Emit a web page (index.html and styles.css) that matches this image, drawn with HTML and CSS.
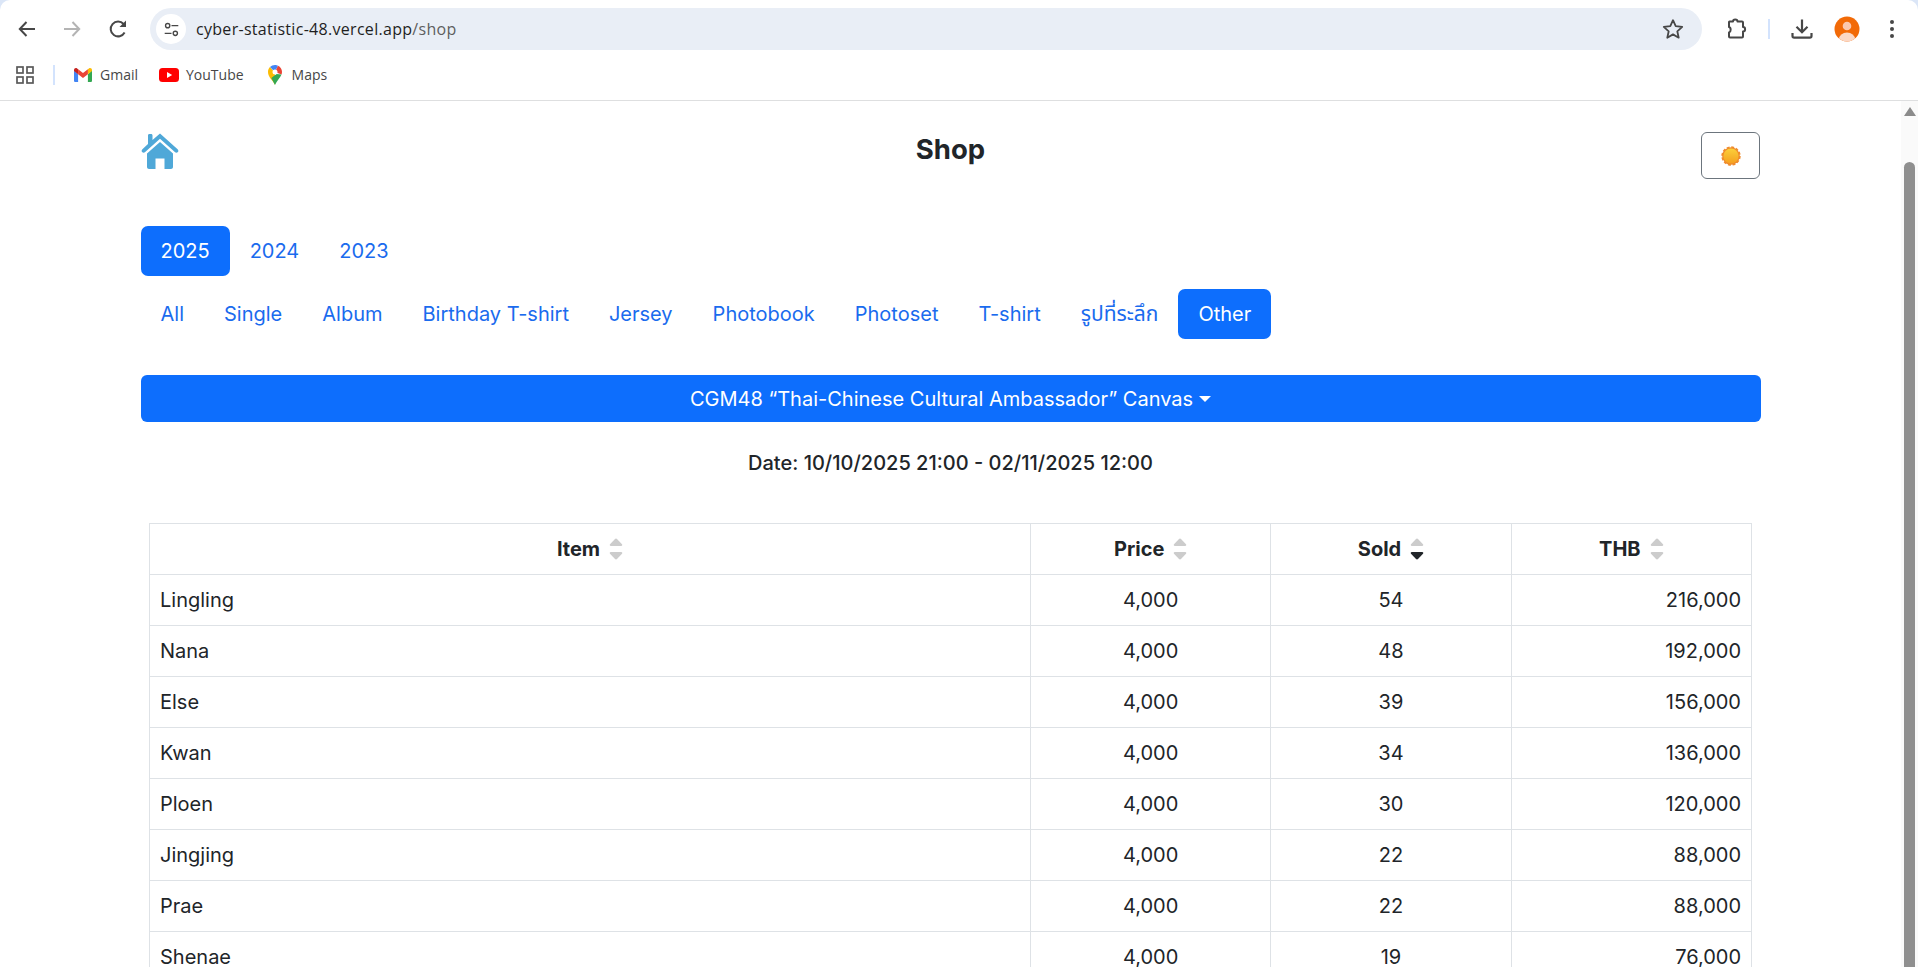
FILE: index.html
```html
<!DOCTYPE html>
<html lang="en">
<head>
<meta charset="utf-8">
<title>Shop</title>
<link rel="stylesheet" href="styles.css">
</head>
<body>
<div class="browser">
  <header class="chrome">
    <div class="toolbar">
      <svg class="tb-icon tb-back" viewBox="0 0 24 24"><path d="M20 12H5M11.5 5L4.8 12l6.7 7" fill="none" stroke="#474747" stroke-width="2"/></svg>
      <svg class="tb-icon tb-forward" viewBox="0 0 24 24"><path d="M4 12h15M12.5 5l6.7 7-6.7 7" fill="none" stroke="#b4b4b4" stroke-width="2"/></svg>
      <svg class="tb-icon tb-reload" viewBox="0 0 24 24"><path d="M18.6 15.5A7.4 7.4 0 1 1 17.6 7L19 8.5" fill="none" stroke="#474747" stroke-width="2"/><path d="M20 3.5V10h-6.5z" fill="#474747"/></svg>
      <div class="omnibox">
        <span class="site-btn">
          <svg viewBox="0 0 20 20" class="site-icon"><circle cx="5.5" cy="5.5" r="2.5" fill="none" stroke="#474747" stroke-width="1.6"/><path d="M10 5.5h8M2 14.5h8" stroke="#474747" stroke-width="1.6"/><circle cx="14.5" cy="14.5" r="2.5" fill="none" stroke="#474747" stroke-width="1.6"/></svg>
        </span>
        <span class="url">cyber-statistic-48.vercel.app<span class="url-path">/shop</span></span>
        <svg class="star" viewBox="0 0 24 24"><path d="M12 3.200l2.700 6 6.500.7-4.900 4.400 1.400 6.400L12 17.400l-5.700 3.300 1.400-6.400-4.900-4.400 6.500-.7z" fill="none" stroke="#474747" stroke-width="1.800" stroke-linejoin="round"/></svg>
      </div>
      <svg class="tb-icon tb-puzzle" viewBox="0 0 24 24"><path d="M5.500 4.500H9c0-2.600 4.500-2.600 4.500 0H18a1 1 0 0 1 1 1V10c2.800 0 2.800 4.500 0 4.500v5a1 1 0 0 1-1 1H6a1 1 0 0 1-1-1v-4c2.200-.6 2.200-5 0-5.500V5a.5.5 0 0 1 .5-.5z" fill="none" stroke="#474747" stroke-width="2" stroke-linejoin="round"/></svg>
      <span class="tb-sep"></span>
      <svg class="tb-icon tb-download" viewBox="0 0 24 24"><path d="M12 2.500v12.500M6.500 9.800L12 15.300l5.500-5.500" fill="none" stroke="#474747" stroke-width="2.200"/><path d="M2.500 16v3c0 1 .6 1.700 1.700 1.700h15.600c1.100 0 1.700-.7 1.700-1.700v-3" fill="none" stroke="#474747" stroke-width="2.200"/></svg>
      <svg class="tb-avatar" viewBox="0 0 26 26"><defs><clipPath id="avatar-clip"><circle cx="13" cy="13" r="12.500"/></clipPath></defs><circle cx="13" cy="13" r="12.500" fill="#f26a07"/><g clip-path="url(#avatar-clip)"><circle cx="13" cy="10" r="4.300" fill="#fbc8ae"/><ellipse cx="13" cy="23" rx="8" ry="6.500" fill="#fbd8c6"/></g></svg>
      <svg class="tb-icon tb-kebab" viewBox="0 0 24 24"><circle cx="12" cy="5" r="2" fill="#474747"/><circle cx="12" cy="12" r="2" fill="#474747"/><circle cx="12" cy="19" r="2" fill="#474747"/></svg>
    </div>
    <nav class="bookmarks">
      <svg class="bm-apps" viewBox="0 0 18 18"><g fill="none" stroke="#5a5a5a" stroke-width="1.700"><rect x="1" y="1" width="6" height="6"/><rect x="11" y="1" width="6" height="6"/><rect x="1" y="11" width="6" height="6"/><rect x="11" y="11" width="6" height="6"/></g></svg>
      <span class="bm-sep"></span>
      <a class="bm bm-gmail">
        <svg class="bm-ic-gmail" viewBox="0 0 18 14"><path d="M0 2.500V12.700C0 13.400.6 14 1.300 14H4.100V6.300z" fill="#4285f4"/><path d="M18 2.500V12.700c0 .7-.6 1.300-1.300 1.300H13.900V6.300z" fill="#34a853"/><path d="M4.100 6.300L0 2.900V2C0 .4 1.800-.5 3.100.5L4.100 1.300z" fill="#c5221f"/><path d="M13.900 6.300L18 2.900V2C18 .4 16.200-.5 14.900.5L13.900 1.300z" fill="#fbbc04"/><path d="M4.100 6.300V1.300L9 5l4.900-3.700v5L9 10z" fill="#ea4335"/></svg>
        <span>Gmail</span>
      </a>
      <a class="bm bm-yt">
        <svg class="bm-ic-yt" viewBox="0 0 20 14"><rect width="20" height="14" rx="3.500" fill="#f00"/><path d="M8 4l5.200 3L8 10z" fill="#fff"/></svg>
        <span>YouTube</span>
      </a>
      <a class="bm bm-maps">
        <svg class="bm-ic-maps" viewBox="0 0 14 20"><path d="M7 20C5.500 16 0 12.300 0 7c0-1.800.7-3.500 2-4.900L7 8z" fill="#fbbc04"/><path d="M2 2.100C3.300.8 5 0 7 0c1 0 2.300.3 3 .7L6.900 7z" fill="#4285f4"/><path d="M10 .7C12.400 1.800 14 4.200 14 7c0 .9-.2 1.800-.5 2.500L7 7z" fill="#ea4335"/><path d="M13.500 9.500C12.300 12.800 8.500 16 7 20L3.300 13 8.500 9z" fill="#34a853"/><circle cx="7" cy="7" r="2.500" fill="#fff"/></svg>
        <span>Maps</span>
      </a>
    </nav>
  </header>

  <div class="viewport">
    <main class="page">
      <div class="container">
        <div class="title-row">
          <svg class="home-icon" viewBox="0 0 38 38"><path d="M19 1.500L36.600 17.200c.9.800 1 2 .3 2.900-.7.800-2 .9-2.800.2L19 6.800 3.900 20.300c-.8.700-2.100.6-2.800-.2-.7-.9-.6-2.100.3-2.900L7 12V3.500c0-.8.600-1.400 1.400-1.400h1.700c.8 0 1.400.6 1.400 1.400V8z" fill="#4fa8d8"/><path d="M19 10L6 21.600V35c0 1.100.9 2 2 2h6.500V26.500h9V37H30c1.100 0 2-.9 2-2V21.600z" fill="#4fa8d8"/></svg>
          <h1 class="title">Shop</h1>
          <button class="theme-btn" type="button">
            <svg class="sun" viewBox="0 0 20 20"><defs><linearGradient id="sun-fill" x1="0.500" y1="0" x2="0.500" y2="1"><stop offset="0%" stop-color="#fbd03a"/><stop offset="100%" stop-color="#f5a01f"/></linearGradient></defs><circle cx="10" cy="10" r="8.800" fill="#ef8b2c" stroke="#ef8b2c" stroke-width="1.800" stroke-dasharray="2.900 1.710"/><circle cx="10" cy="10" r="7.600" fill="url(#sun-fill)"/></svg>
          </button>
        </div>

        <div class="pills year-pills">
          <a class="pill active">2025</a>
          <a class="pill">2024</a>
          <a class="pill">2023</a>
        </div>
        <div class="pills cat-pills">
          <a class="pill">All</a>
          <a class="pill">Single</a>
          <a class="pill">Album</a>
          <a class="pill">Birthday T-shirt</a>
          <a class="pill">Jersey</a>
          <a class="pill">Photobook</a>
          <a class="pill">Photoset</a>
          <a class="pill">T-shirt</a>
          <a class="pill pill-thai">รูปที่ระลึก</a>
          <a class="pill active">Other</a>
        </div>

        <button class="dropdown-btn" type="button">CGM48 “Thai-Chinese Cultural Ambassador” Canvas<span class="caret"></span></button>

        <p class="date">Date: 10/10/2025 21:00 - 02/11/2025 12:00</p>

        <div class="table-wrap">
          <table class="stats">
            <colgroup>
              <col class="col-item"><col class="col-num"><col class="col-num"><col class="col-num">
            </colgroup>
            <thead>
              <tr>
                <th><span class="th-in">Item<svg class="sort" viewBox="0 0 14 22"><path d="M7 0.500c.4 0 .7.200 1 .500l5 5.300c.6.700.2 1.700-.8 1.700H1.800c-1 0-1.400-1-.8-1.700L6 1c.3-.3.600-.5 1-.5z" fill="#ccc"/><path d="M7 21.500c.4 0 .7-.2 1-.5l5-5.300c.6-.7.200-1.700-.8-1.700H1.800c-1 0-1.400 1-.8 1.700l5 5.300c.3.300.6.500 1 .5z" fill="#ccc"/></svg></span></th>
                <th><span class="th-in">Price<svg class="sort" viewBox="0 0 14 22"><path d="M7 0.500c.4 0 .7.200 1 .500l5 5.300c.6.700.2 1.700-.8 1.700H1.800c-1 0-1.400-1-.8-1.700L6 1c.3-.3.600-.5 1-.5z" fill="#ccc"/><path d="M7 21.500c.4 0 .7-.2 1-.5l5-5.300c.6-.7.200-1.700-.8-1.700H1.800c-1 0-1.400 1-.8 1.700l5 5.300c.3.300.6.500 1 .5z" fill="#ccc"/></svg></span></th>
                <th><span class="th-in">Sold<svg class="sort" viewBox="0 0 14 22"><path d="M7 0.500c.4 0 .7.200 1 .500l5 5.300c.6.700.2 1.700-.8 1.700H1.800c-1 0-1.400-1-.8-1.700L6 1c.3-.3.600-.5 1-.5z" fill="#ccc"/><path d="M7 21.500c.4 0 .7-.2 1-.5l5-5.300c.6-.7.200-1.700-.8-1.700H1.800c-1 0-1.400 1-.8 1.700l5 5.300c.3.300.6.500 1 .5z" fill="#212529"/></svg></span></th>
                <th><span class="th-in">THB<svg class="sort" viewBox="0 0 14 22"><path d="M7 0.500c.4 0 .7.200 1 .500l5 5.300c.6.700.2 1.700-.8 1.700H1.800c-1 0-1.400-1-.8-1.700L6 1c.3-.3.600-.5 1-.5z" fill="#ccc"/><path d="M7 21.500c.4 0 .7-.2 1-.5l5-5.300c.6-.7.200-1.700-.8-1.700H1.800c-1 0-1.400 1-.8 1.700l5 5.300c.3.300.6.500 1 .5z" fill="#ccc"/></svg></span></th>
              </tr>
            </thead>
            <tbody>
              <tr><td>Lingling</td><td class="c">4,000</td><td class="c">54</td><td class="r">216,000</td></tr>
              <tr><td>Nana</td><td class="c">4,000</td><td class="c">48</td><td class="r">192,000</td></tr>
              <tr><td>Else</td><td class="c">4,000</td><td class="c">39</td><td class="r">156,000</td></tr>
              <tr><td>Kwan</td><td class="c">4,000</td><td class="c">34</td><td class="r">136,000</td></tr>
              <tr><td>Ploen</td><td class="c">4,000</td><td class="c">30</td><td class="r">120,000</td></tr>
              <tr><td>Jingjing</td><td class="c">4,000</td><td class="c">22</td><td class="r">88,000</td></tr>
              <tr><td>Prae</td><td class="c">4,000</td><td class="c">22</td><td class="r">88,000</td></tr>
              <tr><td>Shenae</td><td class="c">4,000</td><td class="c">19</td><td class="r">76,000</td></tr>
            </tbody>
          </table>
        </div>
      </div>
    </main>
    <div class="scrollbar">
      <span class="sb-arrow"></span>
      <span class="sb-thumb"></span>
    </div>
  </div>
</div>
</body>
</html>
```
FILE: styles.css
```css
* { box-sizing: border-box; }
html, body { margin: 0; height: 100%; overflow: hidden; }
body {
  background: #dbe6f7;
  color: #212529;
  font-family: Inter, "Noto Sans", "Noto Sans Thai", "Liberation Sans", sans-serif;
  font-size: 20px;
  line-height: 1.5;
}
.browser { height: 967px; display: flex; flex-direction: column; }

/* Browser chrome */
.chrome {
  height: 101px;
  flex: none;
  background: #fff;
  border-bottom: 1px solid #dedfe0;
  border-radius: 10px 10px 0 0;
  font-family: "Open Sans", "Noto Sans", sans-serif;
}
.toolbar { height: 58px; display: flex; align-items: center; padding-left: 15px; }
.tb-icon { width: 24px; height: 24px; flex: none; display: block; }
.tb-forward { margin-left: 21px; }
.tb-reload { margin-left: 22px; }
.omnibox {
  margin-left: 20px;
  width: 1552px;
  height: 42px;
  border-radius: 21px;
  background: #e9eef6;
  display: flex;
  align-items: center;
  padding: 0 17px 0 6px;
  flex: none;
}
.site-btn {
  width: 30px; height: 30px; border-radius: 50%; background: #fff;
  display: flex; align-items: center; justify-content: center; flex: none;
}
.site-icon { width: 17px; height: 17px; }
.url { margin-left: 10px; font-size: 16px; color: #1f1f1f; letter-spacing: 0.3px; white-space: nowrap; flex: 1; line-height: 42px; }
.url-path { color: #5e5e5e; }
.star { width: 24px; height: 24px; flex: none; }
.tb-puzzle { margin-left: 22px; }
.tb-sep { width: 2px; height: 20px; background: #d3e3fd; margin-left: 20px; flex: none; }
.tb-download { margin-left: 20px; }
.tb-avatar { width: 26px; height: 26px; margin-left: 20px; flex: none; }
.tb-kebab { margin-left: 20px; }

.bookmarks { height: 33px; display: flex; align-items: center; padding-left: 16px; font-size: 14px; color: #474747; }
.bm-apps { width: 18px; height: 18px; flex: none; }
.bm-sep { width: 2px; height: 20px; background: #d3e3fd; margin-left: 19px; flex: none; }
.bm { display: flex; align-items: center; }
.bm-gmail { margin-left: 19px; gap: 8px; }
.bm-ic-gmail { width: 18px; height: 14px; }
.bm-yt { margin-left: 21px; gap: 7px; }
.bm-ic-yt { width: 20px; height: 14px; }
.bm-maps { margin-left: 24px; gap: 10px; }
.bm-ic-maps { width: 14px; height: 20px; }

/* Page viewport */
.viewport { flex: 1; min-height: 0; display: flex; background: #fff; }
.page { flex: 1; min-width: 0; overflow: hidden; }
.container { width: 1620px; margin: 0 auto; }

.scrollbar { width: 17px; flex: none; background: #fafafa; }
.sb-arrow {
  display: block; margin: 6px auto 0; width: 0; height: 0;
  border-left: 6px solid transparent; border-right: 6px solid transparent; border-bottom: 9px solid #8b8b8b;
}
.sb-thumb { display: block; width: 11px; height: 820px; margin: 46px auto 0; background: #8f8f8f; border-radius: 6px; }

.title-row { display: grid; grid-template-columns: 1fr auto 1fr; align-items: start; padding-top: 31px; height: 125px; }
.home-icon { width: 38px; height: 38px; }
.title { margin: 0; font-size: 27.5px; font-weight: 700; line-height: 34px; }
.theme-btn {
  justify-self: end;
  margin-right: 0.5px;
  width: 59px; height: 47px; padding: 0; background: #fff; border: 1px solid #6c757d; border-radius: 6px;
  display: flex; align-items: center; justify-content: center;
}
.sun { width: 20px; height: 20px; }

.pills { display: flex; }
.year-pills { margin-bottom: 13px; }
.cat-pills { margin-bottom: 36px; }
.pill { display: block; padding: 10px 20px; border-radius: 7px; color: #1a6bee; height: 50px; line-height: 30px; white-space: nowrap; }
.pill-thai { font-size: 21px; }
.pill.active { background: #0d6efd; color: #fff; }

.dropdown-btn {
  display: flex; align-items: center; justify-content: center;
  width: 100%; height: 47px; padding: 0; border: 0; border-radius: 6px;
  background: #0d6efd; color: #fff; font: inherit;
}
.caret {
  display: inline-block; margin-left: 6px; width: 0; height: 0;
  border-left: 6px solid transparent; border-right: 6px solid transparent; border-top: 6px solid #fff;
}
.date { margin: 26px 0 0; text-align: center; line-height: 30px; font-weight: 500; }
.table-wrap { padding: 0 8.5px; margin-top: 45px; }
.stats { width: 100%; border-collapse: collapse; table-layout: fixed; }
.col-item { width: 881px; }
.stats th, .stats td { border: 1px solid #dee2e6; padding: 10px; line-height: 30px; height: 51px; }
.stats th { font-weight: 700; text-align: center; }
.th-in { display: inline-flex; align-items: center; gap: 9px; }
.sort { width: 14px; height: 22px; flex: none; }
.c { text-align: center; }
.r { text-align: right; }
```
